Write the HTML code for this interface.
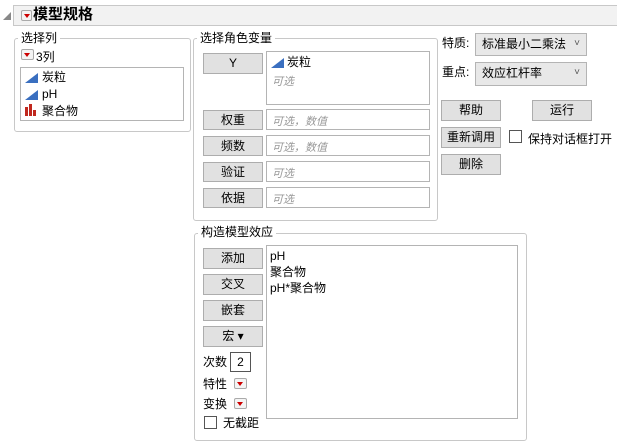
<!DOCTYPE html>
<html><head><meta charset="utf-8"><style>
*{box-sizing:border-box;margin:0;padding:0}
body{width:617px;height:448px;background:#fff;position:relative;overflow:hidden;font-family:"Liberation Sans","Noto Sans CJK SC",sans-serif;font-size:12px;color:#000}
.a{position:absolute;line-height:16px}
.grp{position:absolute;border:1px solid #c8c8c8;border-radius:3px}
.lbl{position:absolute;background:#fff;padding:0 3px;font-size:12px;line-height:14px}
.btn{position:absolute;background:#e1e1e1;border:1px solid #adadad;text-align:center;font-size:12px;line-height:18px}
.box{position:absolute;border:1px solid #b4b4b4;background:#fff}
.ph{position:absolute;color:#999;font-style:italic;font-size:11px}
.rb{position:absolute;width:13px;height:11px;border:1px solid #aaa;border-radius:2px;background:#f4f4f4}
.rb:after{content:"";position:absolute;left:2px;top:3px;border-left:3.5px solid transparent;border-right:3.5px solid transparent;border-top:4px solid #c00}
.tri{position:absolute;width:0;height:0;border-left:13px solid transparent;border-bottom:10px solid #3a6fc0}
.cb{position:absolute;width:13px;height:13px;border:1px solid #333;background:#fff}
.dd{position:absolute;background:#e8e8e8;border:1px solid #b4b4b4;font-size:12px;line-height:20px;padding-left:6px}
.dd:after{content:"˅";position:absolute;right:6px;top:0;font-size:10px;color:#555}
</style></head><body>
<div class="a" style="left:3px;top:12px;width:0;height:0;border-left:8px solid transparent;border-bottom:8px solid #888"></div>
<div class="a" style="left:13px;top:5px;width:604px;height:21px;background:#f2f2f2;border:1px solid #c8c8c8;border-right:none"></div>
<div class="rb" style="left:21px;top:10px;width:11px;height:11px"></div>
<div class="a" style="left:33px;top:6px;font-size:15px;font-weight:bold;line-height:18px">模型规格</div>

<div class="grp" style="left:14px;top:38px;width:177px;height:94px"></div>
<div class="lbl" style="left:18px;top:31px">选择列</div>
<div class="rb" style="left:21px;top:49px"></div>
<div class="a" style="left:36px;top:49px">3列</div>
<div class="box" style="left:20px;top:67px;width:164px;height:54px"></div>
<div class="tri" style="left:25px;top:73px"></div><div class="a" style="left:42px;top:69px">炭粒</div>
<div class="tri" style="left:25px;top:90px"></div><div class="a" style="left:42px;top:86px">pH</div>
<div class="a" style="left:25px;top:107px;width:3px;height:9px;background:#c0281e"></div><div class="a" style="left:29px;top:104px;width:3px;height:12px;background:#c0281e"></div><div class="a" style="left:33px;top:110px;width:3px;height:6px;background:#c0281e"></div>
<div class="a" style="left:42px;top:103px">聚合物</div>

<div class="grp" style="left:193px;top:38px;width:245px;height:183px"></div>
<div class="lbl" style="left:197px;top:31px">选择角色变量</div>
<div class="btn" style="left:203px;top:53px;width:60px;height:21px">Y</div>
<div class="box" style="left:266px;top:51px;width:164px;height:54px"></div>
<div class="tri" style="left:271px;top:58px"></div><div class="a" style="left:287px;top:54px">炭粒</div>
<div class="ph" style="left:272px;top:73px">可选</div>
<div class="btn" style="left:203px;top:110px;width:60px;height:20px">权重</div><div class="box" style="left:266px;top:109px;width:164px;height:21px"></div><div class="ph" style="left:272px;top:113px">可选，数值</div>
<div class="btn" style="left:203px;top:136px;width:60px;height:20px">频数</div><div class="box" style="left:266px;top:135px;width:164px;height:21px"></div><div class="ph" style="left:272px;top:139px">可选，数值</div>
<div class="btn" style="left:203px;top:162px;width:60px;height:20px">验证</div><div class="box" style="left:266px;top:161px;width:164px;height:21px"></div><div class="ph" style="left:272px;top:165px">可选</div>
<div class="btn" style="left:203px;top:188px;width:60px;height:20px">依据</div><div class="box" style="left:266px;top:187px;width:164px;height:21px"></div><div class="ph" style="left:272px;top:191px">可选</div>

<div class="a" style="left:442px;top:35px">特质:</div>
<div class="dd" style="left:475px;top:33px;width:112px;height:23px">标准最小二乘法</div>
<div class="a" style="left:442px;top:64px">重点:</div>
<div class="dd" style="left:475px;top:62px;width:112px;height:24px">效应杠杆率</div>
<div class="btn" style="left:441px;top:100px;width:60px;height:21px">帮助</div>
<div class="btn" style="left:532px;top:100px;width:60px;height:21px">运行</div>
<div class="btn" style="left:441px;top:127px;width:60px;height:21px">重新调用</div>
<div class="cb" style="left:509px;top:130px;border-color:#555"></div>
<div class="a" style="left:528px;top:131px">保持对话框打开</div>
<div class="btn" style="left:441px;top:154px;width:60px;height:21px">删除</div>

<div class="grp" style="left:194px;top:233px;width:333px;height:208px"></div>
<div class="lbl" style="left:198px;top:225px">构造模型效应</div>
<div class="btn" style="left:203px;top:248px;width:60px;height:21px">添加</div>
<div class="btn" style="left:203px;top:274px;width:60px;height:21px">交叉</div>
<div class="btn" style="left:203px;top:300px;width:60px;height:21px">嵌套</div>
<div class="btn" style="left:203px;top:326px;width:60px;height:21px">宏 ▾</div>
<div class="box" style="left:266px;top:245px;width:252px;height:174px"></div>
<div class="a" style="left:270px;top:248px">pH</div>
<div class="a" style="left:270px;top:264px">聚合物</div>
<div class="a" style="left:270px;top:280px">pH*聚合物</div>
<div class="a" style="left:203px;top:354px">次数</div>
<div class="box" style="left:230px;top:352px;width:21px;height:20px;border-color:#555;text-align:center;line-height:18px">2</div>
<div class="a" style="left:203px;top:376px">特性</div><div class="rb" style="left:234px;top:378px"></div>
<div class="a" style="left:203px;top:396px">变换</div><div class="rb" style="left:234px;top:398px"></div>
<div class="cb" style="left:204px;top:416px;border-color:#555"></div>
<div class="a" style="left:223px;top:415px">无截距</div>
</body></html>
